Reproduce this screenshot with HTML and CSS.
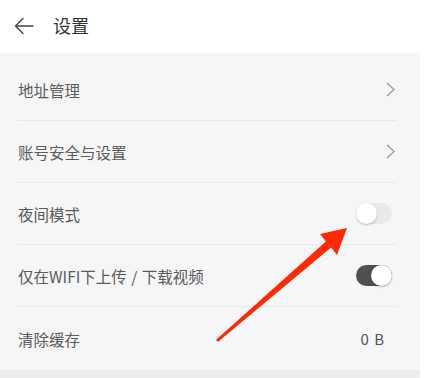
FILE: index.html
```html
<!DOCTYPE html>
<html lang="zh-CN">
<head>
<meta charset="utf-8">
<link rel="stylesheet" href="styles.css">
</head>
<body>
<div class="page">
  <header class="topbar">
    <svg class="back" width="20" height="18" viewBox="0 0 20 18"><path d="M19 9H2M9 1.5L1.5 9L9 16.5" fill="none" stroke="#444" stroke-width="1.4" stroke-linecap="round" stroke-linejoin="round"/></svg>
    <span class="title">设置</span>
  </header>
  <main class="panel">
    <div class="row"><span class="label">地址管理</span><svg class="chev" width="9" height="15" viewBox="0 0 9 15"><path d="M1 1L8 7.5L1 14" fill="none" stroke="#9a9a9a" stroke-width="1.3"/></svg></div>
    <div class="row"><span class="label">账号安全与设置</span><svg class="chev" width="9" height="15" viewBox="0 0 9 15"><path d="M1 1L8 7.5L1 14" fill="none" stroke="#9a9a9a" stroke-width="1.3"/></svg></div>
    <div class="row"><span class="label">夜间模式</span><span class="toggle off"><span class="knob"></span></span></div>
    <div class="row"><span class="label">仅在WIFI下上传 / 下载视频</span><span class="toggle on"><span class="knob"></span></span></div>
    <div class="row last"><span class="label">清除缓存</span><span class="value">0 B</span></div>
  </main>
  <div class="band"></div>
  <svg class="arrow" width="433" height="378" viewBox="0 0 433 378">
    <polygon points="347,228 320,234 325.9,241.5 217,338.9 219,341.1 331.1,247.5 337,255" fill="#fe2a06"/>
    <circle cx="218" cy="340" r="1.6" fill="#fe2a06"/>
  </svg>
</div>
</body>
</html>
```
FILE: styles.css
```css
html, body {
  margin: 0;
  padding: 0;
  background: #ffffff;
}
body {
  font-family: "Noto Sans CJK SC", "Noto Sans", sans-serif;
}
.page {
  position: relative;
  width: 433px;
  height: 378px;
  overflow: hidden;
}
.topbar {
  height: 53px;
  display: flex;
  align-items: center;
  padding-left: 14px;
  box-sizing: border-box;
  background: #ffffff;
}
.back {
  display: block;
  margin-top: -2px;
}
.title {
  margin-left: 19px;
  font-size: 18px;
  color: #333333;
  line-height: 1;
  margin-top: -3px;
}
.panel {
  width: 420px;
  background: #f5f6f7;
  padding-top: 6px;
  display: flex;
  flex-direction: column;
}
.row {
  height: 62px;
  margin: 0 23px 0 18px;
  border-bottom: 1px solid #e8e9ea;
  box-sizing: border-box;
  display: flex;
  align-items: center;
  justify-content: space-between;
}
.row.last {
  height: 63px;
  border-bottom: none;
}
.label {
  font-size: 15.5px;
  color: #5a5a5a;
  margin-left: 0;
  word-spacing: 1px;
}
.chev {
  display: block;
  margin-right: 2px;
}
.value {
  font-size: 15px;
  color: #555555;
  margin-right: 12px;
  letter-spacing: 1px;
}
.toggle {
  position: relative;
  width: 36px;
  height: 21px;
  border-radius: 11px;
  margin-right: 5px;
  box-sizing: border-box;
}
.toggle.off {
  background: #e9e9e9;
}
.toggle.on {
  background: #4f5052;
}
.knob {
  position: absolute;
  top: 0;
  width: 21px;
  height: 21px;
  border-radius: 50%;
  background: #ffffff;
  box-shadow: 0 1px 2px rgba(0,0,0,0.25);
}
.toggle.off .knob { left: 0; }
.toggle.on .knob { right: 0; }
.band {
  width: 420px;
  height: 10px;
  background: #ededee;
}
.arrow {
  position: absolute;
  left: 0;
  top: 0;
  pointer-events: none;
}
```
